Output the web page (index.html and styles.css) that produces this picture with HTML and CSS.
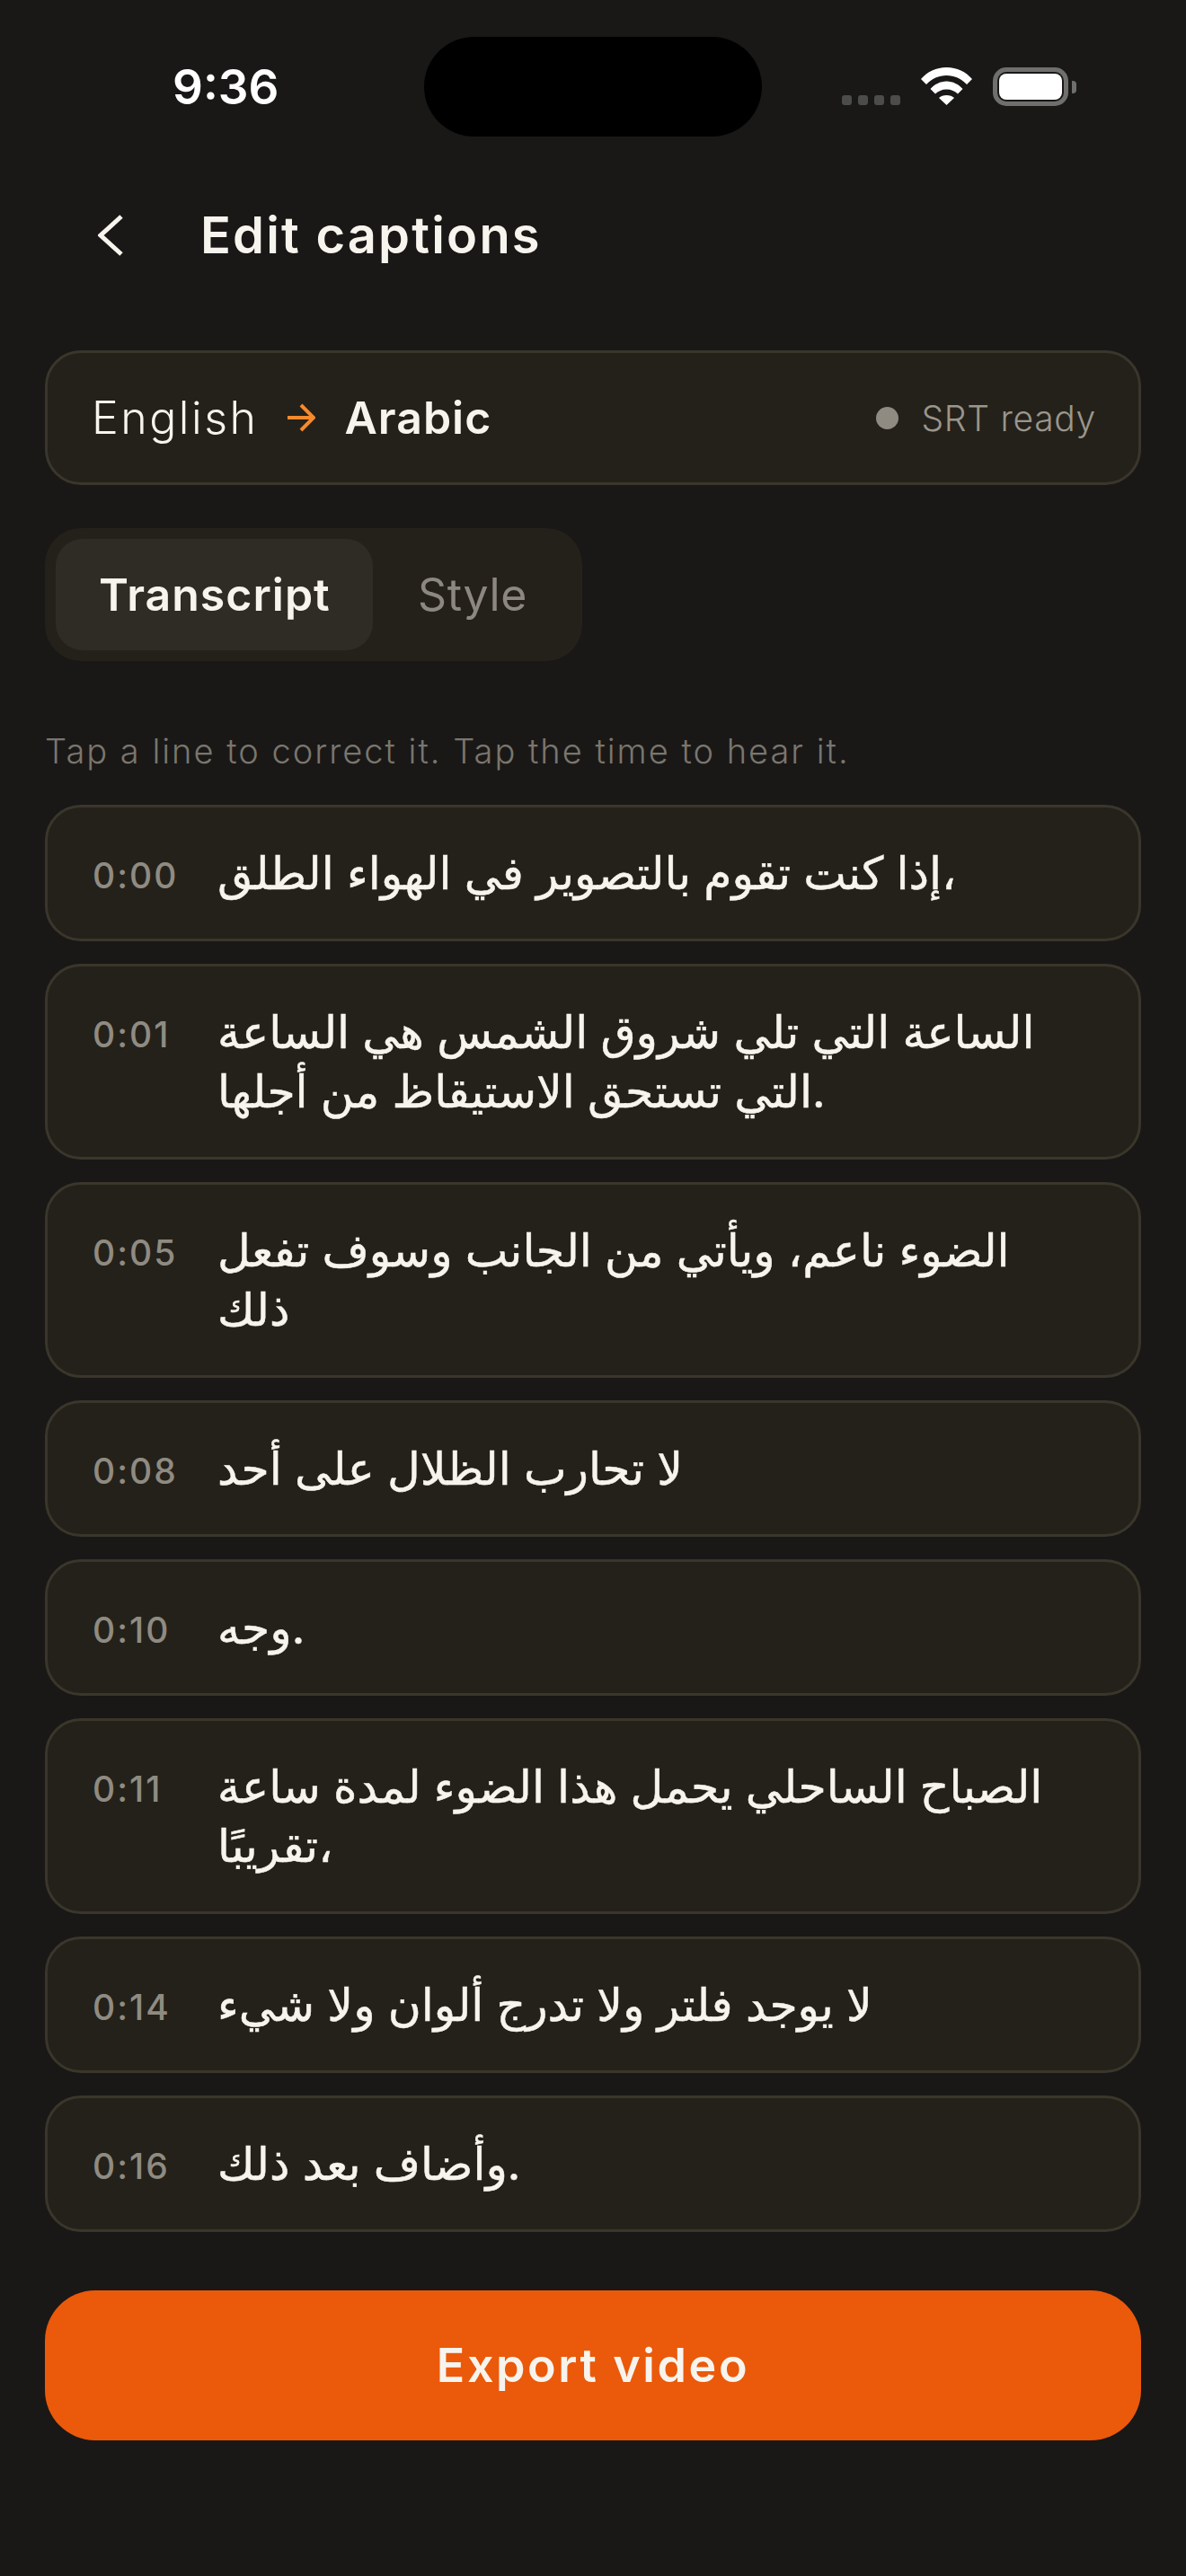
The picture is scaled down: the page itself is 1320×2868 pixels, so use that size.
FILE: index.html
```html
<!DOCTYPE html>
<html lang="en">

<head>
  <meta charset="UTF-8" />
  <meta name="viewport" content="width=device-width, initial-scale=1.0" />
  <title>Edit captions</title>
  <link rel="stylesheet" href="styles.css">
</head>

<body>
  <div class="screen">
    <div class="status">
      <div class="status-time">9:36</div>
      <div class="island"></div>
      <div class="status-icons">
        <div class="signal"><i></i><i></i><i></i><i></i></div>
        <svg class="wifi" width="57" height="42" viewBox="0 0 57 42">
          <path d="M0 13C7 5 17 0 28.5 0S50 5 57 13L51 19C45 12.500 37 9 28.500 9S12 12.500 6 19Z" />
          <path d="M10.500 24C15 19 21.500 15.500 28.500 15.500S42 19 46.500 24L41 29.500C38 26.500 33.500 24.500 28.500 24.500S19 26.500 16 29.500Z" />
          <path d="M20 34C22 32 25 31 28.500 31S35 32 37 34L28.500 42Z" />
        </svg>
        <div class="battery">
          <div class="battery-body"><div class="battery-fill"></div></div>
          <div class="battery-cap"></div>
        </div>
      </div>
    </div>

    <div class="header">
      <svg class="back" width="28" height="46" viewBox="0 0 28 46">
        <path d="M26 2L3 23L26 44" />
      </svg>
      <h1>Edit captions</h1>
    </div>

    <div class="main">
      <div class="lang-card">
        <span class="lang-from">English</span>
        <svg class="lang-arrow" width="32" height="32" viewBox="0 0 32 32">
          <path d="M1 16H29M16 2L30 16L16 30" />
        </svg>
        <span class="lang-to">Arabic</span>
        <div class="srt">
          <span class="srt-dot"></span>
          <span>SRT ready</span>
        </div>
      </div>

      <div class="tabs">
        <div class="tab active">Transcript</div>
        <div class="tab">Style</div>
      </div>

      <p class="hint">Tap a line to correct it. Tap the time to hear it.</p>

      <ul class="lines">
        <li><span class="time">0:00</span><p>إذا كنت تقوم بالتصوير في الهواء الطلق،</p></li>
        <li><span class="time">0:01</span><p>الساعة التي تلي شروق الشمس هي الساعة التي تستحق الاستيقاظ من أجلها.</p></li>
        <li><span class="time">0:05</span><p>الضوء ناعم، ويأتي من الجانب وسوف تفعل ذلك</p></li>
        <li><span class="time">0:08</span><p>لا تحارب الظلال على أحد</p></li>
        <li><span class="time">0:10</span><p>وجه.</p></li>
        <li><span class="time">0:11</span><p>الصباح الساحلي يحمل هذا الضوء لمدة ساعة تقريبًا،</p></li>
        <li><span class="time">0:14</span><p>لا يوجد فلتر ولا تدرج ألوان ولا شيء</p></li>
        <li><span class="time">0:16</span><p>وأضاف بعد ذلك.</p></li>
      </ul>

      <button class="export">Export video</button>
    </div>
  </div>
</body>

</html>
```

FILE: styles.css
```css
* {
  box-sizing: border-box;
}

body {
  margin: 0;
  background: #191817;
  color: #f7f4ee;
  font-family: Inter, "DejaVu Sans", sans-serif;
}

.screen {
  width: 1320px;
  height: 2868px;
  overflow: hidden;
}

/* status bar */
.status {
  display: grid;
  grid-template-columns: 1fr 376px 1fr;
  align-items: center;
  height: 152px;
  padding-top: 41px;
}

.status-time {
  padding-left: 192px;
  font-size: 53px;
  font-weight: 600;
  color: #fff;
}

.island {
  height: 111px;
  background: #000;
  border-radius: 56px;
}

.status-icons {
  display: flex;
  justify-content: flex-end;
  align-items: flex-end;
  gap: 23px;
  padding-right: 122px;
}

.signal {
  display: flex;
  gap: 7px;
  padding-bottom: 1px;
}

.signal i {
  width: 11px;
  height: 11px;
  border-radius: 3px;
  background: #4c4c4b;
}

.wifi {
  display: block;
  margin-bottom: 1px;
  fill: #fff;
}

.battery {
  display: flex;
  align-items: center;
  gap: 4px;
}

.battery-body {
  width: 84px;
  height: 43px;
  padding: 2px;
  border: 5px solid #6f6f6e;
  border-radius: 15px;
}

.battery-fill {
  height: 100%;
  background: #fff;
  border-radius: 8px;
}

.battery-cap {
  width: 5px;
  height: 14px;
  background: #6f6f6e;
  border-radius: 0 4px 4px 0;
}

/* header */
.header {
  display: flex;
  align-items: center;
  height: 220px;
  padding-left: 109px;
}

.back {
  display: block;
  fill: none;
  stroke: #f7f4ee;
  stroke-width: 5;
}

.header h1 {
  margin: 0 0 0 86px;
  font-size: 56px;
  font-weight: 600;
  letter-spacing: 2.200px;
}

.main {
  padding: 18px 50px 0;
}

/* language row */
.lang-card {
  display: flex;
  align-items: center;
  height: 150px;
  padding: 0 47px 0 49px;
  background: #24211a;
  border: 3px solid #3a362b;
  border-radius: 40px;
}

.lang-from {
  font-size: 50px;
  font-weight: 300;
  letter-spacing: 2.500px;
}

.lang-arrow {
  margin: 0 32px;
  fill: none;
  stroke: #f58a2e;
  stroke-width: 4;
}

.lang-to {
  font-size: 50px;
  font-weight: 600;
  letter-spacing: 1px;
}

.srt {
  display: flex;
  align-items: center;
  gap: 25px;
  margin-left: auto;
  font-size: 39px;
  font-weight: 300;
  letter-spacing: .7px;
  color: #9a968d;
}

.srt-dot {
  width: 25px;
  height: 25px;
  border-radius: 50%;
  background: #8f8b83;
}

/* tabs */
.tabs {
  display: flex;
  width: 598px;
  height: 148px;
  margin-top: 48px;
  padding: 12px;
  background: #24211b;
  border-radius: 40px;
}

.tab {
  display: flex;
  align-items: center;
  padding: 0 50px;
  font-size: 50px;
  letter-spacing: .6px;
  color: #8c887f;
}

.tab.active {
  width: 353px;
  padding-left: 48px;
  background: #2f2b25;
  border-radius: 30px;
  font-weight: 600;
  letter-spacing: 1px;
  color: #f7f4ee;
}

.hint {
  margin: 77px 0 36px;
  font-size: 38px;
  line-height: 47px;
  font-weight: 300;
  letter-spacing: 2px;
  color: #7a766e;
}

/* caption lines */
.lines {
  display: flex;
  flex-direction: column;
  gap: 25px;
  margin: 0;
  padding: 0;
  list-style: none;
}

.lines li {
  display: flex;
  padding: 40px 50px;
  background: #24211a;
  border: 3px solid #3a362b;
  border-radius: 40px;
}

.lines .time {
  flex: none;
  width: 139px;
  height: 66px;
  padding-top: 3px;
  font-size: 39px;
  font-weight: 500;
  line-height: 66px;
  letter-spacing: 2px;
  color: #8f8b82;
}

.lines p {
  margin: 0;
  font-size: 50.500px;
  line-height: 66px;
  font-variant-ligatures: none;
  -webkit-text-stroke: .5px #f7f4ee;
}

.export {
  display: block;
  width: 100%;
  height: 167px;
  margin-top: 65px;
  padding: 0;
  appearance: none;
  border: none;
  border-radius: 56px;
  background: #eb590b;
  color: #f7f4ee;
  font-family: inherit;
  font-size: 52px;
  font-weight: 600;
  letter-spacing: 2.600px;
}
```
